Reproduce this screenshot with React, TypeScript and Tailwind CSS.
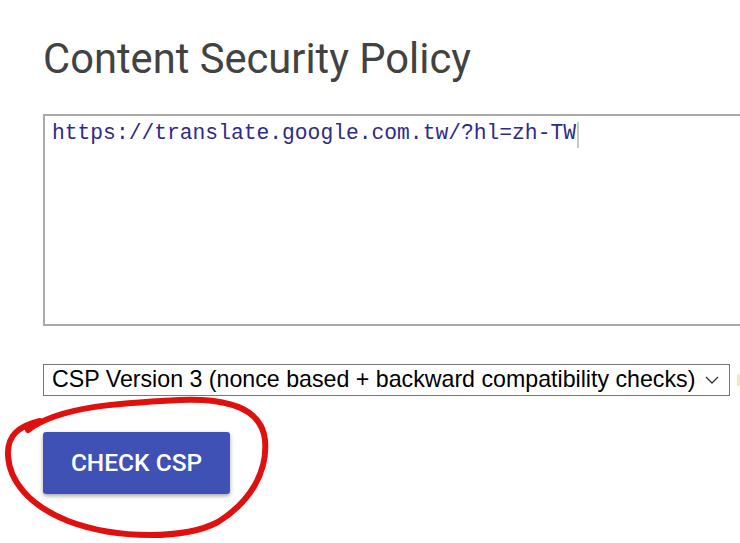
export default function App() {
  return (
    <main className="relative h-[543px] w-[740px] overflow-hidden bg-white">
      <div className="pl-[43px] pt-[31px]">
        <h1 className="font-['Roboto',sans-serif] text-[41.7px] leading-[56px] text-[#424242] ml-[0px]">
          Content Security Policy
        </h1>

        {/* CSP input */}
        <div className="mt-[27px] h-[212px] w-[720px] border-2 border-[#a9a9a9] border-r-0 px-[7px] pt-[3px]">
          <span className="font-['Liberation_Mono',monospace] text-[21.3px] leading-[28px] text-[#2e2a8c]">
            https://translate.google.com.tw/?hl=zh-TW
          </span>
          <span className="inline-block h-[26px] w-[2px] bg-[#c8c8c8] align-middle ml-[1px]" />
        </div>

        {/* version select */}
        <div className="mt-[38px] flex items-center">
          <div className="flex h-[32px] w-[688px] items-center justify-between border border-[#767676] pl-[8px] pr-[8px]">
            <span className="font-['Liberation_Sans',sans-serif] text-[23.2px] leading-none text-black">
              CSP Version 3 (nonce based + backward compatibility checks)
            </span>
            <svg width="14" height="9" viewBox="0 0 14 9" className="mr-[2px]">
              <path d="M1 1 L7 7 L13 1" fill="none" stroke="#333" strokeWidth="1.3" />
            </svg>
          </div>
          <div className="ml-[7px] h-[12px] w-[3px] rounded-full bg-[#f0e6c8]" />
        </div>

        {/* check button */}
        <button className="mt-[36px] flex h-[62px] w-[187px] items-center justify-center rounded-[3px] bg-[#3f51b5] font-['Roboto',sans-serif] text-[24.5px] font-medium text-white shadow-[0_2px_4px_rgba(0,0,0,0.35)]">
          CHECK CSP
        </button>
      </div>

      {/* hand-drawn annotation */}
      <svg className="absolute left-0 top-0" width="740" height="543" viewBox="0 0 740 543">
        <path
          d="M 28 430 C 60 406, 120 403, 180 400 C 232 398, 262 410, 265 440 C 268 472, 250 502, 218 522 C 186 539, 118 540, 68 521 C 28 505, 9 480, 8 455 C 7 436, 18 426, 40 421"
          fill="none"
          stroke="#e0100f"
          strokeWidth="6"
          strokeLinecap="round"
        />
      </svg>
    </main>
  );
}
